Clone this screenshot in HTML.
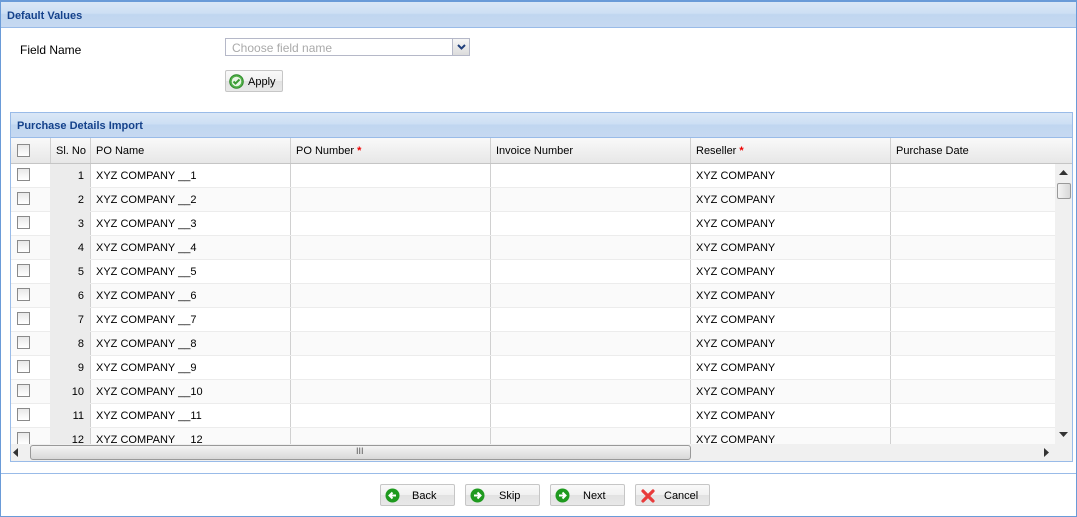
<!DOCTYPE html>
<html><head><meta charset="utf-8"><style>
*{box-sizing:border-box;margin:0;padding:0}
body{width:1077px;height:517px;background:#fff;font-family:"Liberation Sans",Arial,sans-serif;font-size:11px;color:#000;position:relative;overflow:hidden}
.abs{position:absolute}
.outer{left:0;top:0;width:1077px;height:517px;border:1px solid #6a9bd8;border-top:2px solid #6a9bd8}
.hdr{background:linear-gradient(#dae7f6 0,#cddff4 45%,#c0d6f0 50%,#c6d9f1 100%);border-bottom:1px solid #99bbe8;color:#15428b;font-weight:bold;font-size:11px}
.btn{border:1px solid #c6c6c6;border-radius:2px;background:linear-gradient(#f9f9f9 0,#f1f1f1 50%,#e2e2e2 51%,#e8e8e8 100%);font-size:11px}
.cb{width:13px;height:13px;border:1px solid #8a8a8a;background:linear-gradient(#e8e8e8,#fff)}
.cell{position:absolute;top:0;height:24px;line-height:25px;padding-left:6px;white-space:nowrap}
.row{position:absolute;left:0;width:1044px;height:24px;border-bottom:1px solid #ececec}
.vl{position:absolute;top:0;width:1px;height:100%;background:#d0d0d0}
</style></head><body>
<div class="abs outer"></div>
<div class="abs hdr" style="left:1px;top:2px;width:1075px;height:26px;padding:8px 0 0 6px">Default Values</div>
<div class="abs" style="left:20px;top:43px;font-size:12px">Field Name</div>
<div class="abs" style="left:225px;top:38px;width:245px;height:18px;border:1px solid #b5b8c8;color:#aaa;font-size:12px;padding:2px 0 0 6px">Choose field name</div>
<div class="abs" style="left:452px;top:39px;width:17px;height:16px;border-left:1px solid #b5b8c8;background:linear-gradient(#f6f6f6,#dcdcdc)"><svg width="17" height="16"><path d="M5 6l3.5 3.5L12 6" stroke="#1f3e7a" stroke-width="2" fill="none"/></svg></div>
<div class="abs btn" style="left:225px;top:70px;width:58px;height:22px"><svg class="abs" style="left:3px;top:3px" width="15" height="15"><circle cx="7.5" cy="7.5" r="6.8" fill="#52b14a" stroke="#2f8a2a"/><circle cx="7.5" cy="7.5" r="4.8" fill="#e8f5e4"/><path d="M4.5 7.5l2 2 4-4" stroke="#3a9a33" stroke-width="2" fill="none"/></svg><span class="abs" style="left:22px;top:5px">Apply</span></div>

<div class="abs" style="left:10px;top:112px;width:1063px;height:350px;border:1px solid #99bbe8"></div>
<div class="abs hdr" style="left:11px;top:113px;width:1061px;height:25px;padding:7px 0 0 6px">Purchase Details Import</div>
<div class="abs" style="left:11px;top:138px;width:1061px;height:26px;background:linear-gradient(#f9f9f9,#e7e7e7);border-bottom:1px solid #c5c5c5">
 <div class="cb abs" style="left:6px;top:6px"></div>
 <div class="vl" style="left:39px"></div><div class="vl" style="left:79px"></div><div class="vl" style="left:279px"></div><div class="vl" style="left:479px"></div><div class="vl" style="left:679px"></div><div class="vl" style="left:879px"></div>
 <span class="cell" style="left:39px;line-height:27px">Sl. No</span>
 <span class="cell" style="left:79px;line-height:27px">PO Name</span>
 <span class="cell" style="left:279px;line-height:27px">PO Number <b style="color:#e00">*</b></span>
 <span class="cell" style="left:479px;line-height:27px">Invoice Number</span>
 <span class="cell" style="left:679px;line-height:27px">Reseller <b style="color:#e00">*</b></span>
 <span class="cell" style="left:879px;line-height:27px">Purchase Date</span>
</div>
<div class="abs" style="left:1055px;top:164px;width:17px;height:280px;background:#f0f0f0">
 <svg class="abs" style="left:4px;top:6px" width="9" height="6"><path d="M0 5h9L4.5 0z" fill="#333"/></svg>
 <div class="abs" style="left:2px;top:19px;width:14px;height:16px;border:1px solid #999;border-radius:2px;background:linear-gradient(90deg,#f4f4f4,#d8d8d8)"></div>
 <svg class="abs" style="left:4px;top:268px" width="9" height="6"><path d="M0 0h9L4.5 5z" fill="#333"/></svg>
</div>
<div class="abs" style="left:11px;top:444px;width:1061px;height:17px;background:#f0f0f0">
 <svg class="abs" style="left:2px;top:4px" width="6" height="9"><path d="M5 0v9L0 4.5z" fill="#333"/></svg>
 <div class="abs" style="left:19px;top:1px;width:661px;height:15px;border:1px solid #999;border-radius:3px;background:linear-gradient(#f4f4f4,#d8d8d8)"><span class="abs" style="left:325px;top:0px;font-size:9px;color:#555">III</span></div>
 <svg class="abs" style="left:1033px;top:4px" width="6" height="9"><path d="M0 0v9L5 4.5z" fill="#333"/></svg>
</div>

<div class="abs" style="left:1px;top:473px;width:1075px;height:1px;background:#99bbe8"></div>

<div class="abs btn" style="left:380px;top:484px;width:75px;height:22px"><svg class="abs" style="left:4px;top:3px" width="15" height="15"><circle cx="7.5" cy="7.5" r="7" fill="#1f9a1f"/><path d="M11 7.5H5M7.5 4.5l-3 3 3 3" stroke="#fff" stroke-width="2" fill="none"/></svg><span class="abs" style="left:31px;top:5px">Back</span></div>
<div class="abs btn" style="left:465px;top:484px;width:75px;height:22px"><svg class="abs" style="left:4px;top:3px" width="15" height="15"><circle cx="7.5" cy="7.5" r="7" fill="#1f9a1f"/><path d="M4 7.5h6M7.5 4.5l3 3-3 3" stroke="#fff" stroke-width="2" fill="none"/></svg><span class="abs" style="left:33px;top:5px">Skip</span></div>
<div class="abs btn" style="left:550px;top:484px;width:75px;height:22px"><svg class="abs" style="left:4px;top:3px" width="15" height="15"><circle cx="7.5" cy="7.5" r="7" fill="#1f9a1f"/><path d="M4 7.5h6M7.5 4.5l3 3-3 3" stroke="#fff" stroke-width="2" fill="none"/></svg><span class="abs" style="left:32px;top:5px">Next</span></div>
<div class="abs btn" style="left:635px;top:484px;width:75px;height:22px"><svg class="abs" style="left:5px;top:4px" width="14" height="14"><path d="M2 2l10 10M12 2L2 12" stroke="#e83b3b" stroke-width="3.2" stroke-linecap="round"/></svg><span class="abs" style="left:28px;top:5px">Cancel</span></div>

<div class="abs" style="left:11px;top:164px;width:1044px;height:280px;overflow:hidden">
 <div class="row" style="top:0;background:#fff"><div class="cb abs" style="left:6px;top:4px"></div><div class="abs" style="left:39px;top:0;width:40px;height:24px;background:#ececec"></div><div class="vl" style="left:79px"></div><div class="vl" style="left:279px"></div><div class="vl" style="left:479px"></div><div class="vl" style="left:679px"></div><div class="vl" style="left:879px"></div><span class="cell" style="left:39px;width:40px;text-align:right;padding-right:6px">1</span><span class="cell" style="left:79px">XYZ COMPANY __1</span><span class="cell" style="left:679px">XYZ COMPANY</span></div>
 <div class="row" style="top:24px;background:#fafafa"><div class="cb abs" style="left:6px;top:4px"></div><div class="abs" style="left:39px;top:0;width:40px;height:24px;background:#ececec"></div><div class="vl" style="left:79px"></div><div class="vl" style="left:279px"></div><div class="vl" style="left:479px"></div><div class="vl" style="left:679px"></div><div class="vl" style="left:879px"></div><span class="cell" style="left:39px;width:40px;text-align:right;padding-right:6px">2</span><span class="cell" style="left:79px">XYZ COMPANY __2</span><span class="cell" style="left:679px">XYZ COMPANY</span></div>
 <div class="row" style="top:48px;background:#fff"><div class="cb abs" style="left:6px;top:4px"></div><div class="abs" style="left:39px;top:0;width:40px;height:24px;background:#ececec"></div><div class="vl" style="left:79px"></div><div class="vl" style="left:279px"></div><div class="vl" style="left:479px"></div><div class="vl" style="left:679px"></div><div class="vl" style="left:879px"></div><span class="cell" style="left:39px;width:40px;text-align:right;padding-right:6px">3</span><span class="cell" style="left:79px">XYZ COMPANY __3</span><span class="cell" style="left:679px">XYZ COMPANY</span></div>
 <div class="row" style="top:72px;background:#fafafa"><div class="cb abs" style="left:6px;top:4px"></div><div class="abs" style="left:39px;top:0;width:40px;height:24px;background:#ececec"></div><div class="vl" style="left:79px"></div><div class="vl" style="left:279px"></div><div class="vl" style="left:479px"></div><div class="vl" style="left:679px"></div><div class="vl" style="left:879px"></div><span class="cell" style="left:39px;width:40px;text-align:right;padding-right:6px">4</span><span class="cell" style="left:79px">XYZ COMPANY __4</span><span class="cell" style="left:679px">XYZ COMPANY</span></div>
 <div class="row" style="top:96px;background:#fff"><div class="cb abs" style="left:6px;top:4px"></div><div class="abs" style="left:39px;top:0;width:40px;height:24px;background:#ececec"></div><div class="vl" style="left:79px"></div><div class="vl" style="left:279px"></div><div class="vl" style="left:479px"></div><div class="vl" style="left:679px"></div><div class="vl" style="left:879px"></div><span class="cell" style="left:39px;width:40px;text-align:right;padding-right:6px">5</span><span class="cell" style="left:79px">XYZ COMPANY __5</span><span class="cell" style="left:679px">XYZ COMPANY</span></div>
 <div class="row" style="top:120px;background:#fafafa"><div class="cb abs" style="left:6px;top:4px"></div><div class="abs" style="left:39px;top:0;width:40px;height:24px;background:#ececec"></div><div class="vl" style="left:79px"></div><div class="vl" style="left:279px"></div><div class="vl" style="left:479px"></div><div class="vl" style="left:679px"></div><div class="vl" style="left:879px"></div><span class="cell" style="left:39px;width:40px;text-align:right;padding-right:6px">6</span><span class="cell" style="left:79px">XYZ COMPANY __6</span><span class="cell" style="left:679px">XYZ COMPANY</span></div>
 <div class="row" style="top:144px;background:#fff"><div class="cb abs" style="left:6px;top:4px"></div><div class="abs" style="left:39px;top:0;width:40px;height:24px;background:#ececec"></div><div class="vl" style="left:79px"></div><div class="vl" style="left:279px"></div><div class="vl" style="left:479px"></div><div class="vl" style="left:679px"></div><div class="vl" style="left:879px"></div><span class="cell" style="left:39px;width:40px;text-align:right;padding-right:6px">7</span><span class="cell" style="left:79px">XYZ COMPANY __7</span><span class="cell" style="left:679px">XYZ COMPANY</span></div>
 <div class="row" style="top:168px;background:#fafafa"><div class="cb abs" style="left:6px;top:4px"></div><div class="abs" style="left:39px;top:0;width:40px;height:24px;background:#ececec"></div><div class="vl" style="left:79px"></div><div class="vl" style="left:279px"></div><div class="vl" style="left:479px"></div><div class="vl" style="left:679px"></div><div class="vl" style="left:879px"></div><span class="cell" style="left:39px;width:40px;text-align:right;padding-right:6px">8</span><span class="cell" style="left:79px">XYZ COMPANY __8</span><span class="cell" style="left:679px">XYZ COMPANY</span></div>
 <div class="row" style="top:192px;background:#fff"><div class="cb abs" style="left:6px;top:4px"></div><div class="abs" style="left:39px;top:0;width:40px;height:24px;background:#ececec"></div><div class="vl" style="left:79px"></div><div class="vl" style="left:279px"></div><div class="vl" style="left:479px"></div><div class="vl" style="left:679px"></div><div class="vl" style="left:879px"></div><span class="cell" style="left:39px;width:40px;text-align:right;padding-right:6px">9</span><span class="cell" style="left:79px">XYZ COMPANY __9</span><span class="cell" style="left:679px">XYZ COMPANY</span></div>
 <div class="row" style="top:216px;background:#fafafa"><div class="cb abs" style="left:6px;top:4px"></div><div class="abs" style="left:39px;top:0;width:40px;height:24px;background:#ececec"></div><div class="vl" style="left:79px"></div><div class="vl" style="left:279px"></div><div class="vl" style="left:479px"></div><div class="vl" style="left:679px"></div><div class="vl" style="left:879px"></div><span class="cell" style="left:39px;width:40px;text-align:right;padding-right:6px">10</span><span class="cell" style="left:79px">XYZ COMPANY __10</span><span class="cell" style="left:679px">XYZ COMPANY</span></div>
 <div class="row" style="top:240px;background:#fff"><div class="cb abs" style="left:6px;top:4px"></div><div class="abs" style="left:39px;top:0;width:40px;height:24px;background:#ececec"></div><div class="vl" style="left:79px"></div><div class="vl" style="left:279px"></div><div class="vl" style="left:479px"></div><div class="vl" style="left:679px"></div><div class="vl" style="left:879px"></div><span class="cell" style="left:39px;width:40px;text-align:right;padding-right:6px">11</span><span class="cell" style="left:79px">XYZ COMPANY __11</span><span class="cell" style="left:679px">XYZ COMPANY</span></div>
 <div class="row" style="top:264px;background:#fafafa"><div class="cb abs" style="left:6px;top:4px"></div><div class="abs" style="left:39px;top:0;width:40px;height:24px;background:#ececec"></div><div class="vl" style="left:79px"></div><div class="vl" style="left:279px"></div><div class="vl" style="left:479px"></div><div class="vl" style="left:679px"></div><div class="vl" style="left:879px"></div><span class="cell" style="left:39px;width:40px;text-align:right;padding-right:6px">12</span><span class="cell" style="left:79px">XYZ COMPANY __12</span><span class="cell" style="left:679px">XYZ COMPANY</span></div>
</div>
</body></html>
